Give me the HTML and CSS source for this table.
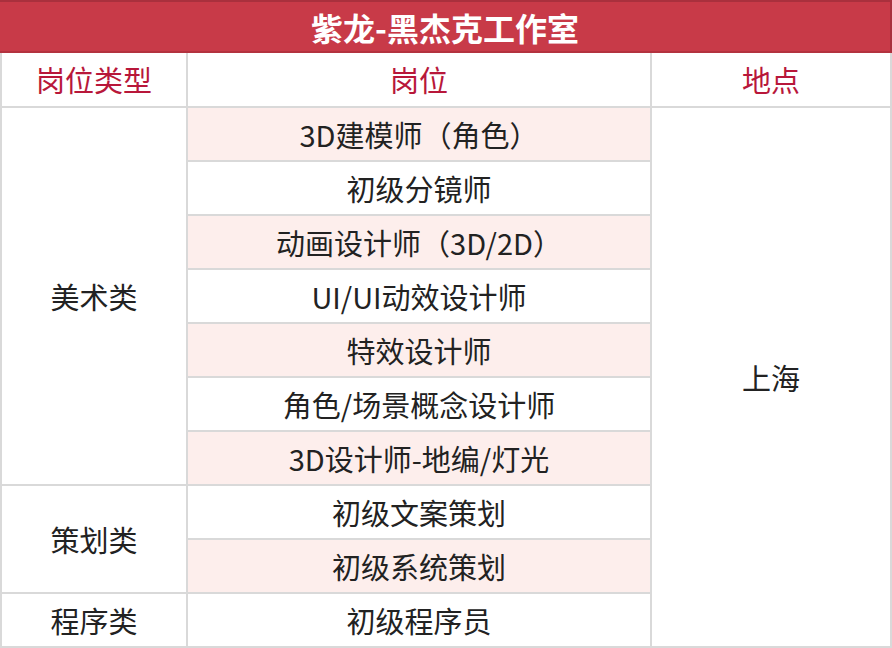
FILE: index.html
```html
<!DOCTYPE html>
<html lang="zh-CN">
<head>
<meta charset="utf-8">
<title>紫龙-黑杰克工作室</title>
<link rel="stylesheet" href="styles.css">
</head>
<body>
<div class="sheet">
  <div class="title">紫龙-黑杰克工作室</div>
  <div class="grid">
    <div class="cell head">岗位类型</div>
    <div class="cell head">岗位</div>
    <div class="cell head">地点</div>

    <div class="cell cat art">美术类</div>
    <div class="cell pos pink">3D建模师（角色）</div>
    <div class="cell loc">上海</div>
    <div class="cell pos">初级分镜师</div>
    <div class="cell pos pink">动画设计师（3D/2D）</div>
    <div class="cell pos">UI/UI动效设计师</div>
    <div class="cell pos pink">特效设计师</div>
    <div class="cell pos">角色/场景概念设计师</div>
    <div class="cell pos pink">3D设计师-地编/灯光</div>

    <div class="cell cat plan">策划类</div>
    <div class="cell pos">初级文案策划</div>
    <div class="cell pos pink">初级系统策划</div>

    <div class="cell cat prog">程序类</div>
    <div class="cell pos">初级程序员</div>
  </div>
</div>
</body>
</html>
```
FILE: styles.css
```css
html, body {
  margin: 0;
  padding: 0;
  background: #ffffff;
}
.sheet {
  width: 892px;
  height: 648px;
  font-family: "Noto Sans CJK SC", "Noto Sans", sans-serif;
}
.title {
  box-sizing: border-box;
  height: 53px;
  background: #c83a48;
  border-top: 2px solid #a9303d;
  border-right: 2px solid #a9303d;
  border-bottom: 2px solid #b3323f;
  color: #ffffff;
  font-weight: 700;
  font-size: 32px;
  display: flex;
  align-items: center;
  justify-content: center;
  line-height: 1;
}
.grid {
  display: grid;
  grid-template-columns: 184px 462px 238px;
  grid-template-rows: 53px repeat(10, 52px);
  gap: 2px;
  padding: 0 2px 2px 2px;
  background: #d9d9d9;
}
.cell {
  background: #ffffff;
  display: flex;
  align-items: center;
  justify-content: center;
  font-size: 29px;
  color: #222222;
  line-height: 1;
}
.head {
  color: #b8173a;
}
.pink {
  background: #fdeeec;
}
.art {
  grid-column: 1;
  grid-row: 2 / span 7;
}
.plan {
  grid-column: 1;
  grid-row: 9 / span 2;
}
.prog {
  grid-column: 1;
  grid-row: 11;
}
.loc {
  grid-column: 3;
  grid-row: 2 / span 10;
}
.pos {
  grid-column: 2;
}
```
